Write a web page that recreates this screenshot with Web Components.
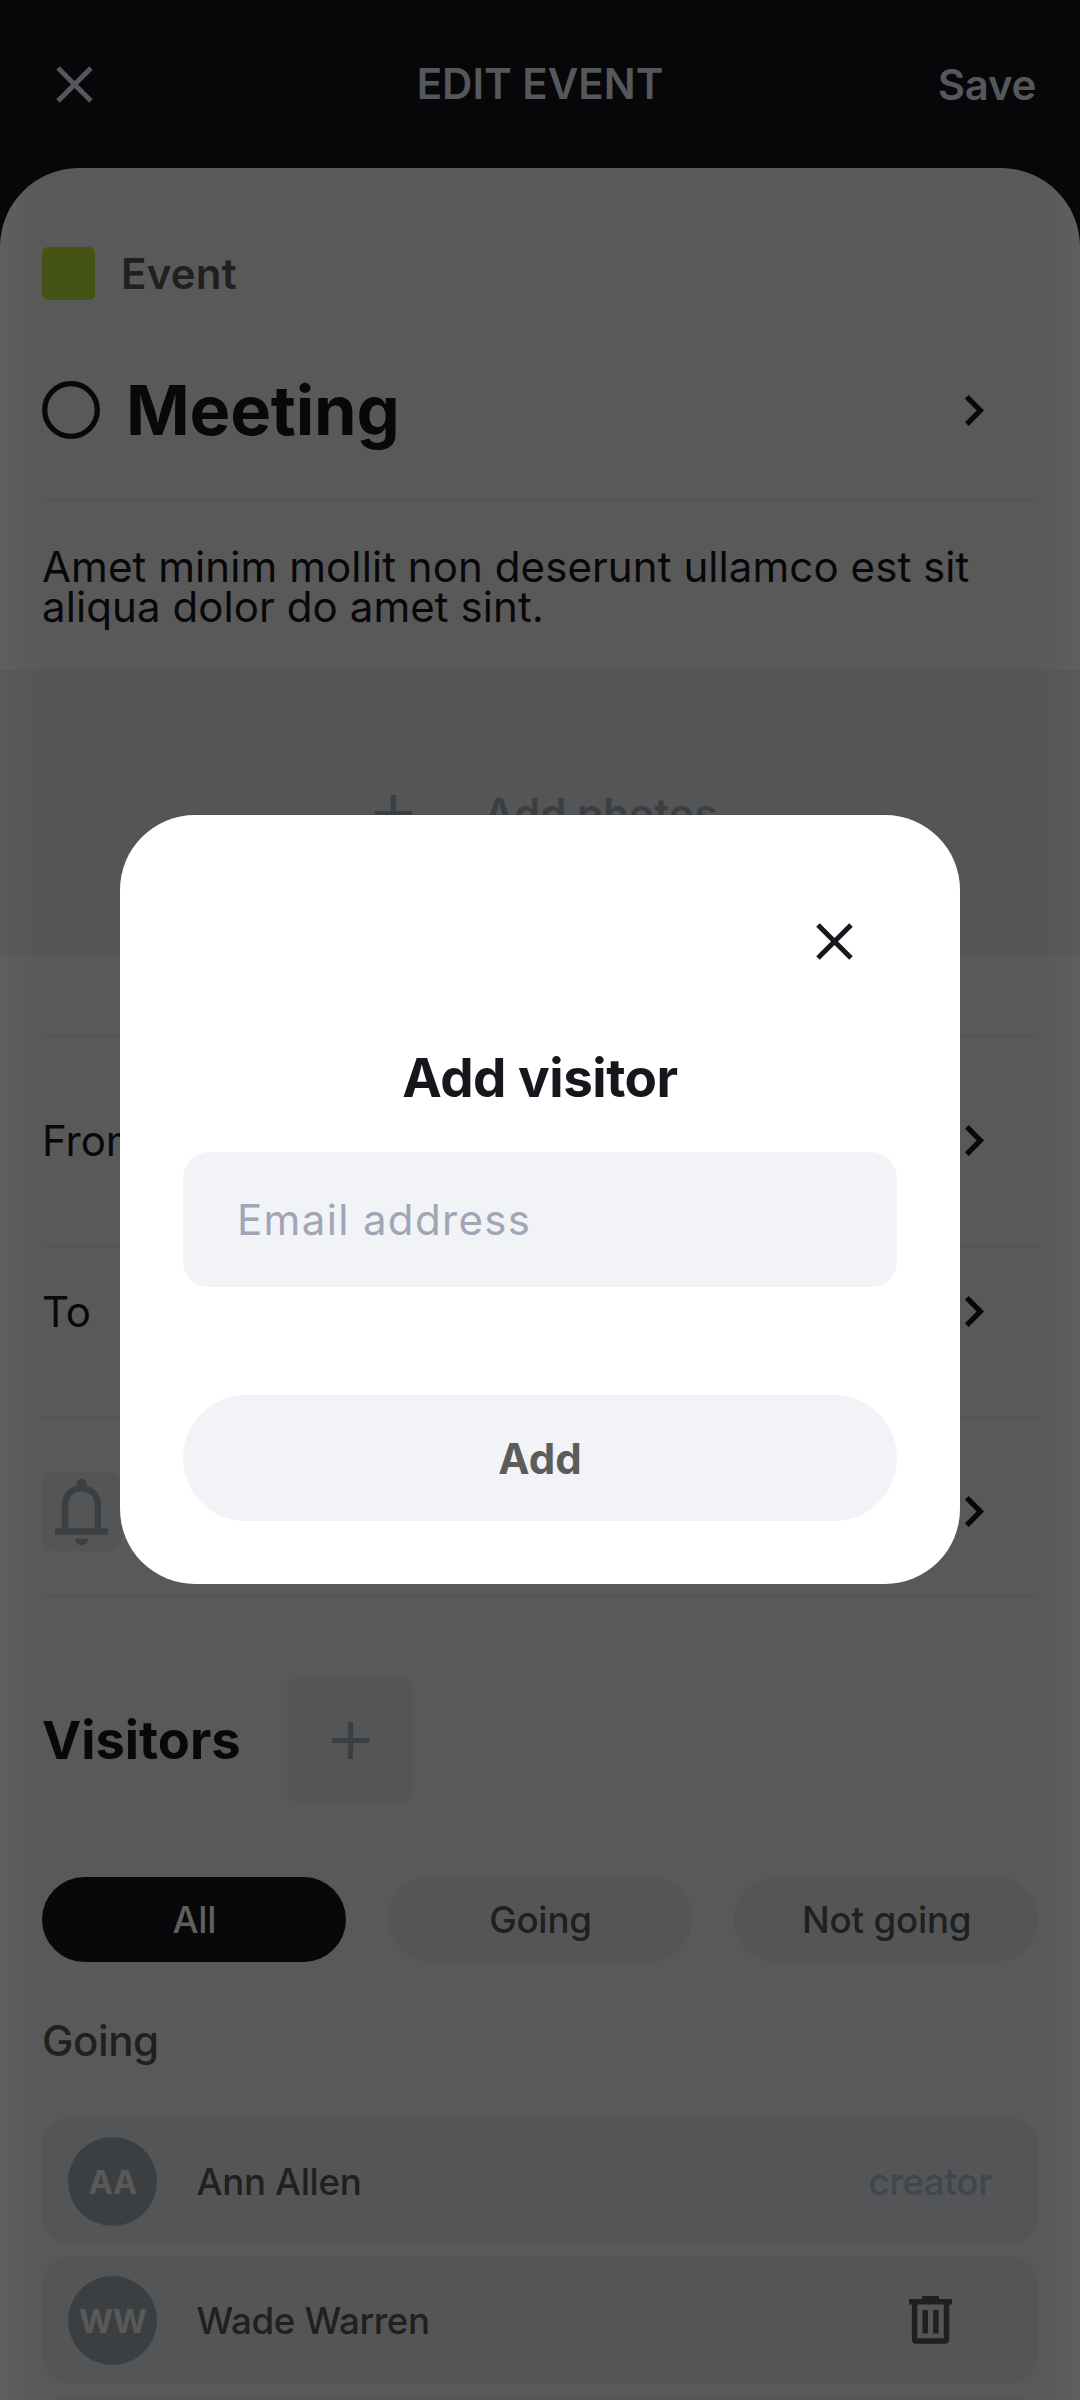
<!DOCTYPE html>
<html lang="en">
<head>
<meta charset="utf-8">
<title>Edit event</title>
<style>
html,body{margin:0;padding:0}
body{width:1080px;height:2400px;overflow:hidden;background:#060608;font-family:Inter,"Liberation Sans",sans-serif}
</style>
</head>
<body>
<edit-event-page></edit-event-page>
<script>
const def=(name,html)=>customElements.define(name,class extends HTMLElement{
  constructor(){super();this.attachShadow({mode:'open'}).innerHTML=html}
});

const ICONS={
  close:[37,37,'<path d="M2 2L35 35M35 2L2 35" fill="none" stroke="currentColor" stroke-width="5"/>'],
  chevron:[19,31,'<path d="M1.8 1.8L15.3 15.5L1.8 29.2" fill="none" stroke="currentColor" stroke-width="5.300"/>'],
  plus:[37,37,'<path d="M18.500 0V37M0 18.500H37" fill="none" stroke="currentColor" stroke-width="5.200"/>'],
  ring:[58,58,'<circle cx="29" cy="29" r="26.300" fill="none" stroke="currentColor" stroke-width="5.300"/>'],
  bell:[53,66,'<path d="M10.100 51V26C10.100 15.500 17 9.600 26.500 9.600S42.900 15.500 42.900 26V51" fill="none" stroke="currentColor" stroke-width="6.300"/><rect x="0" y="49.300" width="53" height="6.400" rx="1" fill="currentColor"/><rect x="21.500" y="0" width="10" height="11" rx="5" fill="currentColor"/><path d="M20 59.700H33C33 63.500 30 66 26.500 66S20 63.500 20 59.700Z" fill="currentColor"/>'],
  trash:[43,48,'<path d="M0 3H13V0H30V3H43V8.500H0Z" fill="currentColor"/><path d="M5.600 6V43.500Q5.600 45 7.100 45H36Q37.500 45 37.500 43.500V6" fill="none" stroke="currentColor" stroke-width="5.500"/><path d="M16.200 14V37.500M26.900 14V37.500" fill="none" stroke="currentColor" stroke-width="5.500"/>']
};
customElements.define('ui-icon',class extends HTMLElement{
  constructor(){super();this.attachShadow({mode:'open'})}
  connectedCallback(){
    const [w,h,body]=ICONS[this.getAttribute('name')];
    this.shadowRoot.innerHTML=`<style>:host{display:block;flex:none;width:${w}px;height:${h}px}svg{display:block;overflow:visible}</style><svg width="${w}" height="${h}" viewBox="0 0 ${w} ${h}">${body}</svg>`;
  }
});

def('top-bar',`<style>
:host{display:flex;box-sizing:border-box;height:168px;padding:0 44px 0 56px;align-items:center;color:#54575b;font-size:42px;font-weight:600}
.c,.l,.r{display:flex;height:42px;align-items:center}
.c{margin:0 12px 1px 0}
.l{flex:1}.r{flex:1;justify-content:flex-end;letter-spacing:-.3px}
</style><div class="l"><ui-icon name="close"></ui-icon></div><div class="c"><slot></slot></div><div class="r"><slot name="action"></slot></div>`);

def('event-row',`<style>
:host{display:flex;box-sizing:border-box;margin:0 42px;height:var(--h);padding:var(--pt,0px) 54px var(--pb,0px) 0;align-items:center;justify-content:space-between;border-bottom:3px solid #53565a;color:#08080a;font-size:42px}
div{display:flex;align-items:center}
ui-icon{color:#08080a}
</style><div><slot></slot></div><ui-icon name="chevron"></ui-icon>`);

def('photo-strip',`<style>
:host{display:flex;box-sizing:border-box;height:286px;padding-left:375px;gap:72px;align-items:center;background:linear-gradient(90deg,#5a5a5b 0,#545557 43px,#545557 1037px,#5a5a5b 1080px);color:#3c3f42;font-size:42px;font-weight:600}
</style><ui-icon name="plus"></ui-icon><span><slot></slot></span>`);

def('square-badge',`<style>
:host{display:flex;flex:none;align-items:center;justify-content:center;width:var(--w);height:var(--w);border-radius:13px;background:#545557;color:#3c3f42}
</style><slot></slot>`);

def('filter-chip',`<style>
:host{display:flex;flex:1;box-sizing:border-box;padding-left:1px;align-items:center;justify-content:center;height:85px;border-radius:43px;background:#545557;color:#20201e;font-size:36.700px;font-weight:500;letter-spacing:-.2px}
:host([selected]){background:#08080a;color:#5f5f5f}
</style><slot></slot>`);

def('visitor-card',`<style>
:host{display:flex;box-sizing:border-box;height:126px;margin:0 42px 13px;padding:0 46px 0 25.500px;align-items:center;border-radius:27px;background:#545557;color:#20201e;font-size:36.700px;font-weight:500;letter-spacing:-.35px}
.a{display:flex;box-sizing:border-box;width:89px;height:89px;padding:2px 0 0 1px;margin-right:39px;border-radius:50%;align-items:center;justify-content:center;background:#3c3f42;color:#595959;font-size:33px;font-weight:700;letter-spacing:-1px}
.n{flex:1;padding-left:1px}
</style><div class="a"><slot name="initials"></slot></div><div class="n"><slot></slot></div><slot name="end"></slot>`);

def('add-dialog',`<style>
:host{position:absolute;left:120px;top:815px;width:840px;height:769px;box-sizing:border-box;padding:108px 63px 0;border-radius:75px;background:#fff;display:flex;flex-direction:column;color:#17161d}
.x{align-self:flex-end;margin-right:44px}
h2{margin:86px 0 0;height:64px;line-height:64px;font-size:53px;font-weight:700;text-align:center;letter-spacing:-.5px}
.f{display:flex;align-items:center;margin-top:42px;height:135px;border-radius:26px;padding-left:54px;background:#f1f3f7;color:#a1a5b5;font-size:42px;letter-spacing:1.350px}
.b{display:flex;align-items:center;justify-content:center;margin-top:108px;height:126px;border-radius:63px;background:#f1f3f7;color:#5c5c59;font-size:42px;font-weight:700}
</style><ui-icon class="x" name="close"></ui-icon><h2><slot name="title"></slot></h2><div class="f"><slot name="field"></slot></div><div class="b"><slot name="button"></slot></div>`);

def('edit-event-page',`<style>
:host{display:block;position:relative;width:1080px;height:2400px;overflow:hidden;background:#070709}
.sheet{height:2232px;border-radius:79px 79px 0 0;overflow:hidden;background:linear-gradient(90deg,#5f5f5f 0,#595959 43px,#595959 1037px,#5f5f5f 1080px)}
.type{display:flex;align-items:center;gap:26px;margin:79px 42px 0;height:53px;font-size:42px;font-weight:600;letter-spacing:.2px;color:#20201e}
.sw{width:53px;height:53px;border-radius:6px;background:#455415}
.title{font-size:68.500px;font-weight:700;letter-spacing:-.2px;margin-left:26px}
.ring{color:#08080a}
p{margin:45px 42px 0;height:123px;font-size:42px;line-height:40.300px;letter-spacing:.08px;color:#08080a}
.gap{height:79px;margin:0 42px;border-bottom:3px solid #53565a}
.vis{display:flex;align-items:center;margin:79px 42px 0;height:126px;gap:46px;font-size:52.500px;font-weight:700;color:#08080a}
.vis ui-icon{margin-left:1px}
.chips{display:flex;gap:42.500px;margin:74px 42px 0}
.sub{margin:53px 42px 0;height:103px;line-height:51px;font-size:42px;font-weight:500;letter-spacing:-.4px;color:#20201e}
</style>
<top-bar>EDIT EVENT<span slot="action">Save</span></top-bar>
<div class="sheet">
<div class="type"><div class="sw"></div><span>Event</span></div>
<event-row style="--h:184px;--pt:3px;margin-top:18px"><ui-icon class="ring" name="ring"></ui-icon><span class="title">Meeting</span></event-row>
<p>Amet minim mollit non deserunt ullamco est sit aliqua dolor do amet sint.</p>
<photo-strip>Add photos</photo-strip>
<div class="gap"></div>
<event-row style="--h:210px;--pb:2px">From</event-row>
<event-row style="--h:171px;--pb:41px">To</event-row>
<event-row style="--h:179px;--pt:9px"><square-badge style="--w:79px"><ui-icon name="bell"></ui-icon></square-badge></event-row>
<div class="vis"><span>Visitors</span><square-badge style="--w:126px"><ui-icon name="plus"></ui-icon></square-badge></div>
<div class="chips"><filter-chip selected>All</filter-chip><filter-chip>Going</filter-chip><filter-chip>Not going</filter-chip></div>
<div class="sub">Going</div>
<visitor-card><span slot="initials">AA</span>Ann Allen<span slot="end" style="color:#404550">creator</span></visitor-card>
<visitor-card><span slot="initials">WW</span>Wade Warren<ui-icon slot="end" name="trash" style="margin-right:40px"></ui-icon></visitor-card>
<visitor-card></visitor-card>
</div>
<add-dialog><span slot="title">Add visitor</span><span slot="field">Email address</span><span slot="button">Add</span></add-dialog>`);
</script>
</body>
</html>
